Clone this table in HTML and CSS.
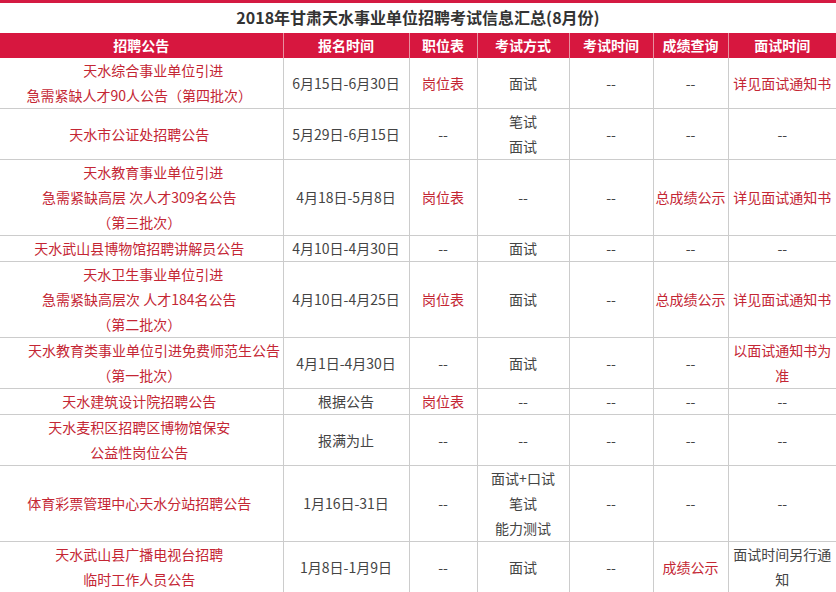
FILE: index.html
```html
<!DOCTYPE html>
<html lang="zh-CN">
<head>
<meta charset="utf-8">
<title>2018年甘肃天水事业单位招聘考试信息汇总(8月份)</title>
<link rel="stylesheet" href="styles.css">
</head>
<body>
<div class="page">
  <div class="topline"></div>
  <h1 class="title">2018年甘肃天水事业单位招聘考试信息汇总(8月份)</h1>
  <table class="info">
    <colgroup>
      <col class="c1"><col class="c2"><col class="c3"><col class="c4"><col class="c5"><col class="c6"><col class="c7">
    </colgroup>
    <thead>
      <tr>
        <th>招聘公告</th><th>报名时间</th><th>职位表</th><th>考试方式</th><th>考试时间</th><th>成绩查询</th><th>面试时间</th>
      </tr>
    </thead>
    <tbody>
      <tr>
        <td class="first red">　　天水综合事业单位引进<br>急需紧缺人才90人公告<span class="fw">（</span>第四批次<span class="fw">）</span></td>
        <td>6月15日-6月30日</td><td class="red">岗位表</td><td>面试</td><td>--</td><td>--</td><td class="red">详见面试通知书</td>
      </tr>
      <tr>
        <td class="first red">天水市公证处招聘公告</td>
        <td>5月29日-6月15日</td><td>--</td><td>笔试<br>面试</td><td>--</td><td>--</td><td>--</td>
      </tr>
      <tr>
        <td class="first red">　　天水教育事业单位引进<br>急需紧缺高层 次人才309名公告<br><span class="fw">（</span>第三批次<span class="fw">）</span></td>
        <td>4月18日-5月8日</td><td class="red">岗位表</td><td>--</td><td>--</td><td class="red">总成绩公示</td><td class="red">详见面试通知书</td>
      </tr>
      <tr>
        <td class="first red">天水武山县博物馆招聘讲解员公告</td>
        <td>4月10日-4月30日</td><td>--</td><td>面试</td><td>--</td><td>--</td><td>--</td>
      </tr>
      <tr>
        <td class="first red">　　天水卫生事业单位引进<br>急需紧缺高层次 人才184名公告<br><span class="fw">（</span>第二批次<span class="fw">）</span></td>
        <td>4月10日-4月25日</td><td class="red">岗位表</td><td>面试</td><td>--</td><td class="red">总成绩公示</td><td class="red">详见面试通知书</td>
      </tr>
      <tr>
        <td class="first red">　　天水教育类事业单位引进免费师范生公告<br><span class="fw">（</span>第一批次<span class="fw">）</span></td>
        <td>4月1日-4月30日</td><td>--</td><td>面试</td><td>--</td><td>--</td><td class="red">以面试通知书为准</td>
      </tr>
      <tr>
        <td class="first red">天水建筑设计院招聘公告</td>
        <td>根据公告</td><td class="red">岗位表</td><td>--</td><td>--</td><td>--</td><td>--</td>
      </tr>
      <tr>
        <td class="first red">天水麦积区招聘区博物馆保安<br>公益性岗位公告</td>
        <td>报满为止</td><td>--</td><td>--</td><td>--</td><td>--</td><td>--</td>
      </tr>
      <tr>
        <td class="first red">体育彩票管理中心天水分站招聘公告</td>
        <td>1月16日-31日</td><td>--</td><td>面试+口试<br>笔试<br>能力测试</td><td>--</td><td>--</td><td>--</td>
      </tr>
      <tr>
        <td class="first red">天水武山县广播电视台招聘<br>临时工作人员公告</td>
        <td>1月8日-1月9日</td><td>--</td><td>面试</td><td>--</td><td class="red">成绩公示</td><td>面试时间另行通知</td>
      </tr>
    </tbody>
  </table>
</div>
</body>
</html>
```

FILE: styles.css
```css
html, body {
  margin: 0;
  padding: 0;
  background: #ffffff;
}

body {
  font-family: "Noto Sans CJK SC", "Noto Sans", sans-serif;
  color: #444444;
  font-size: 14px;
}

.page {
  width: 836px;
  overflow: hidden;
}

.topline {
  height: 3px;
  background: #d41a42;
}

.title {
  margin: 0;
  height: 30px;
  line-height: 29px;
  font-size: 16px;
  font-weight: bold;
  color: #333333;
  text-align: center;
}

.info {
  width: 836px;
  table-layout: fixed;
  border-collapse: collapse;
}

.c1 { width: 283px; }
.c2 { width: 126px; }
.c3 { width: 68px; }
.c4 { width: 92px; }
.c5 { width: 84px; }
.c6 { width: 75px; }
.c7 { width: 108px; }

.info th {
  background: #d7173f;
  color: #ffffff;
  font-weight: bold;
  font-size: 14px;
  height: 25px;
  line-height: 25px;
  padding: 0;
  border-left: 1px solid #e8909f;
  text-align: center;
}

.info th:first-child {
  border-left: none;
}

.info td {
  padding: 0;
  line-height: 25px;
  text-align: center;
  vertical-align: middle;
  border: 1px solid #cccccc;
  border-top: none;
  color: #444444;
  white-space: normal;
}

.info td.first {
  border-left: none;
  padding-right: 4px;
  white-space: nowrap;
}

.info td:last-child {
  border-right: none;
}

.info td.red {
  color: #c42634;
}

.fw {
  display: inline-block;
  width: 14px;
  text-align: center;
}
```
